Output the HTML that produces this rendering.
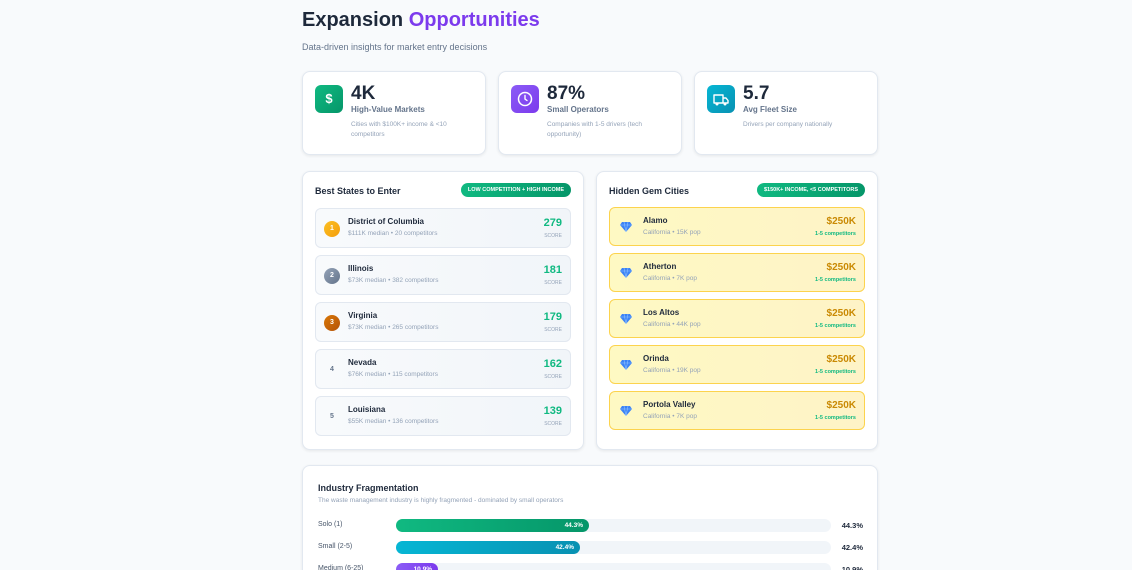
<!DOCTYPE html>
<html style="width:1132px;height:570px;overflow:hidden"><head><meta charset="utf-8"><style>
*{box-sizing:border-box;margin:0;padding:0}
body{width:1132px;height:570px;overflow:hidden;background:#f8fafc;font-family:"Liberation Sans",sans-serif;color:#0f172a;position:relative}
.a{position:absolute}
.card{position:absolute;background:#fff;border:1px solid #e2e8f0;border-radius:8px;box-shadow:0 1px 3px rgba(0,0,0,.08)}
.ic{position:absolute;left:12px;top:13px;width:28px;height:28px;border-radius:6px}
.num{position:absolute;left:48px;top:11px;font-size:19px;font-weight:bold;color:#1e293b}
.lab{position:absolute;left:48px;top:33px;font-size:8px;font-weight:bold;color:#64748b}
.desc{position:absolute;left:48px;top:48px;font-size:6.5px;color:#94a3b8;line-height:10px;width:125px}
.ptitle{position:absolute;left:12px;top:14px;font-size:9px;font-weight:bold;color:#1e293b}
.badge{position:absolute;right:12px;top:11px;height:14px;border-radius:7px;background:linear-gradient(90deg,#10b981,#059669);color:#fff;font-size:5.5px;font-weight:bold;line-height:14px;padding:0 7px}
.row{position:absolute;left:12px;width:256px;height:40px;border:1px solid #e2e8f0;border-radius:6px;background:linear-gradient(90deg,#f8fafc,#f1f5f9)}
.rk{position:absolute;left:8px;top:12px;width:16px;height:16px;border-radius:50%;color:#fff;font-size:7px;font-weight:bold;text-align:center;line-height:16px}
.nm{position:absolute;left:32px;top:8px;font-size:8px;font-weight:bold;color:#1e293b}
.sub{position:absolute;left:32px;top:21px;font-size:6.5px;color:#94a3b8}
.sc{position:absolute;right:8px;top:8px;font-size:11px;font-weight:bold;color:#10b981}
.scl{position:absolute;right:8px;top:24px;font-size:5px;color:#94a3b8}
.grow{position:absolute;left:12px;width:256px;height:39px;border:1px solid #fcd34d;border-radius:6px;background:linear-gradient(90deg,#fef9c3,#fef3c7)}
.gem{position:absolute;left:10px;top:13px}
.gn{position:absolute;left:33px;top:8px;font-size:8px;font-weight:bold;color:#1e293b}
.gs{position:absolute;left:33px;top:21px;font-size:6.5px;color:#94a3b8}
.gv{position:absolute;right:8px;top:8px;font-size:10px;font-weight:bold;color:#ca8a04}
.gc{position:absolute;right:8px;top:23px;font-size:5.5px;font-weight:bold;color:#10b981}
.bl{position:absolute;left:15px;font-size:7px;color:#475569}
.bt{position:absolute;left:93px;width:435px;height:13px;border-radius:7px;background:#f1f5f9}
.bf{height:13px;border-radius:7px;color:#fff;font-size:6.5px;font-weight:bold;text-align:right;padding-right:6px;line-height:13px}
.bv{position:absolute;right:14px;font-size:7.5px;font-weight:bold;color:#1e293b}
</style></head><body>
<div class="a" style="left:302px;top:9px;font-size:20px;font-weight:bold;color:#1e293b">Expansion <span style="color:#7c3aed">Opportunities</span></div>
<div class="a" style="left:302px;top:42px;font-size:9px;color:#64748b">Data-driven insights for market entry decisions</div>

<div class="card" style="left:302px;top:71px;width:184px;height:84px">
<div class="ic" style="background:linear-gradient(135deg,#10b981,#059669)"><div style="color:#fff;font-size:13px;font-weight:bold;text-align:center;line-height:28px">$</div></div>
<div class="num">4K</div><div class="lab">High-Value Markets</div><div class="desc">Cities with $100K+ income &amp; &lt;10 competitors</div></div>
<div class="card" style="left:498px;top:71px;width:184px;height:84px">
<div class="ic" style="background:linear-gradient(135deg,#8b5cf6,#7c3aed)"><svg width="28" height="28"><circle cx="14" cy="14" r="6.5" fill="none" stroke="#fff" stroke-width="1.5"/><path d="M14 10.5V14l2 1.5" fill="none" stroke="#fff" stroke-width="1.4" stroke-linecap="round"/></svg></div>
<div class="num">87%</div><div class="lab">Small Operators</div><div class="desc">Companies with 1-5 drivers (tech opportunity)</div></div>
<div class="card" style="left:694px;top:71px;width:184px;height:84px">
<div class="ic" style="background:linear-gradient(135deg,#06b6d4,#0891b2)"><svg width="28" height="28"><path d="M7 10h9v8H7zM16 13h3l2 2.5V18h-5z" fill="none" stroke="#fff" stroke-width="1.4" stroke-linejoin="round"/><circle cx="10" cy="19" r="1.5" fill="#fff"/><circle cx="18" cy="19" r="1.5" fill="#fff"/></svg></div>
<div class="num">5.7</div><div class="lab">Avg Fleet Size</div><div class="desc">Drivers per company nationally</div></div>

<div class="card" style="left:302px;top:171px;width:282px;height:279px">
<div class="ptitle">Best States to Enter</div><div class="badge">LOW COMPETITION + HIGH INCOME</div>
<div class="row" style="top:36px"><div class="rk" style="background:linear-gradient(135deg,#fbbf24,#f59e0b)">1</div><div class="nm">District of Columbia</div><div class="sub">$111K median • 20 competitors</div><div class="sc">279</div><div class="scl">SCORE</div></div>
<div class="row" style="top:83px"><div class="rk" style="background:linear-gradient(135deg,#94a3b8,#64748b)">2</div><div class="nm">Illinois</div><div class="sub">$73K median • 382 competitors</div><div class="sc">181</div><div class="scl">SCORE</div></div>
<div class="row" style="top:130px"><div class="rk" style="background:linear-gradient(135deg,#d97706,#b45309)">3</div><div class="nm">Virginia</div><div class="sub">$73K median • 265 competitors</div><div class="sc">179</div><div class="scl">SCORE</div></div>
<div class="row" style="top:177px"><div class="rk" style="color:#64748b">4</div><div class="nm">Nevada</div><div class="sub">$76K median • 115 competitors</div><div class="sc">162</div><div class="scl">SCORE</div></div>
<div class="row" style="top:224px"><div class="rk" style="color:#64748b">5</div><div class="nm">Louisiana</div><div class="sub">$55K median • 136 competitors</div><div class="sc">139</div><div class="scl">SCORE</div></div>
</div>

<div class="card" style="left:596px;top:171px;width:282px;height:279px">
<div class="ptitle">Hidden Gem Cities</div><div class="badge">$150K+ INCOME, &lt;5 COMPETITORS</div>
<div class="grow" style="top:35px"><svg class="gem" width="12" height="11"><path d="M2 1h8l2 3-6 7-6-7z" fill="#3b82f6"/><path d="M0 4h12M4 1l2 10 2-10" stroke="#93c5fd" stroke-width=".6" fill="none"/></svg><div class="gn">Alamo</div><div class="gs">California • 15K pop</div><div class="gv">$250K</div><div class="gc">1-5 competitors</div></div>
<div class="grow" style="top:81px"><svg class="gem" width="12" height="11"><path d="M2 1h8l2 3-6 7-6-7z" fill="#3b82f6"/><path d="M0 4h12M4 1l2 10 2-10" stroke="#93c5fd" stroke-width=".6" fill="none"/></svg><div class="gn">Atherton</div><div class="gs">California • 7K pop</div><div class="gv">$250K</div><div class="gc">1-5 competitors</div></div>
<div class="grow" style="top:127px"><svg class="gem" width="12" height="11"><path d="M2 1h8l2 3-6 7-6-7z" fill="#3b82f6"/><path d="M0 4h12M4 1l2 10 2-10" stroke="#93c5fd" stroke-width=".6" fill="none"/></svg><div class="gn">Los Altos</div><div class="gs">California • 44K pop</div><div class="gv">$250K</div><div class="gc">1-5 competitors</div></div>
<div class="grow" style="top:173px"><svg class="gem" width="12" height="11"><path d="M2 1h8l2 3-6 7-6-7z" fill="#3b82f6"/><path d="M0 4h12M4 1l2 10 2-10" stroke="#93c5fd" stroke-width=".6" fill="none"/></svg><div class="gn">Orinda</div><div class="gs">California • 19K pop</div><div class="gv">$250K</div><div class="gc">1-5 competitors</div></div>
<div class="grow" style="top:219px"><svg class="gem" width="12" height="11"><path d="M2 1h8l2 3-6 7-6-7z" fill="#3b82f6"/><path d="M0 4h12M4 1l2 10 2-10" stroke="#93c5fd" stroke-width=".6" fill="none"/></svg><div class="gn">Portola Valley</div><div class="gs">California • 7K pop</div><div class="gv">$250K</div><div class="gc">1-5 competitors</div></div>
</div>

<div class="card" style="left:302px;top:465px;width:576px;height:130px">
<div class="a" style="left:15px;top:17px;font-size:9px;font-weight:bold;color:#1e293b">Industry Fragmentation</div>
<div class="a" style="left:15px;top:31px;font-size:6.5px;color:#94a3b8">The waste management industry is highly fragmented - dominated by small operators</div>
<div class="bl" style="top:55px">Solo (1)</div><div class="bt" style="top:53px"><div class="bf" style="width:193px;background:linear-gradient(90deg,#10b981,#059669)">44.3%</div></div><div class="bv" style="top:55px">44.3%</div>
<div class="bl" style="top:77px">Small (2-5)</div><div class="bt" style="top:75px"><div class="bf" style="width:184px;background:linear-gradient(90deg,#06b6d4,#0891b2)">42.4%</div></div><div class="bv" style="top:77px">42.4%</div>
<div class="bl" style="top:99px">Medium (6-25)</div><div class="bt" style="top:97px"><div class="bf" style="width:42px;background:linear-gradient(90deg,#8b5cf6,#7c3aed)">10.9%</div></div><div class="bv" style="top:99px">10.9%</div>
</div>
</body></html>
